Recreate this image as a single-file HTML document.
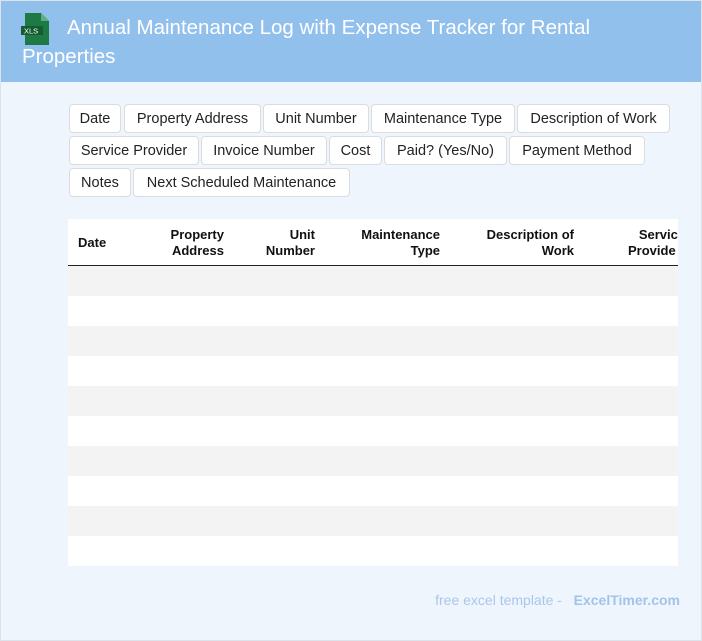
<!DOCTYPE html>
<html><head><style>
*{margin:0;padding:0;box-sizing:border-box}
body{width:702px;height:641px;background:#eef5fd;font-family:"Liberation Sans",sans-serif;position:relative;overflow:hidden}
.frame{position:absolute;left:0;top:0;width:702px;height:641px;border:1px solid #dde3ea;pointer-events:none}
.hdr{position:absolute;left:0;top:0;width:702px;height:82px;background:#92c0ec}
.title{position:absolute;left:22px;top:13px;width:660px;color:#fff;font-size:20.5px;line-height:29px;text-indent:45px}
.tag{position:absolute;height:29px;background:#fff;border:1px solid #dcdcdc;border-radius:4px;font-size:14.5px;line-height:28px;text-align:center;color:#222;white-space:nowrap}
.tbl{position:absolute;left:68px;top:219px;width:610px;height:347px;background:#fff;overflow:hidden}
.th{position:absolute;top:8px;font-size:13px;font-weight:bold;line-height:16px;color:#111;text-align:right;white-space:nowrap}
.line{position:absolute;left:0;top:46px;width:610px;height:1px;background:#222}
.row{position:absolute;left:0;width:610px;height:30px;background:#f3f3f3}
.foot{position:absolute;right:22px;top:592px;font-size:14px;color:#a9c7ea}
</style></head><body>
<div class="hdr"></div>
<svg style="position:absolute;left:21px;top:13px" width="30" height="32" viewBox="0 0 30 32"><path d="M4 0h16l8 8v24H4z" fill="#1e7a45"/><path d="M20 0l8 8h-8z" fill="#5fae7c"/><rect x="0" y="13" width="22" height="9" fill="#155c33"/><text x="3" y="20.5" font-size="7.5" fill="#fff" font-family="Liberation Sans">XLS</text></svg>
<div class="title">Annual Maintenance Log with Expense Tracker for Rental Properties</div>
<div class="tag" style="left:69px;top:104px;width:52px">Date</div>
<div class="tag" style="left:124px;top:104px;width:137px">Property Address</div>
<div class="tag" style="left:263px;top:104px;width:106px">Unit Number</div>
<div class="tag" style="left:371px;top:104px;width:144px">Maintenance Type</div>
<div class="tag" style="left:517px;top:104px;width:153px">Description of Work</div>
<div class="tag" style="left:69px;top:136px;width:130px">Service Provider</div>
<div class="tag" style="left:201px;top:136px;width:126px">Invoice Number</div>
<div class="tag" style="left:329px;top:136px;width:53px">Cost</div>
<div class="tag" style="left:384px;top:136px;width:123px">Paid? (Yes/No)</div>
<div class="tag" style="left:509px;top:136px;width:136px">Payment Method</div>
<div class="tag" style="left:69px;top:168px;width:62px">Notes</div>
<div class="tag" style="left:133px;top:168px;width:217px">Next Scheduled Maintenance</div>
<div class="tbl">
<div class="th" style="left:10px;top:16px;text-align:left">Date</div>
<div class="th" style="right:454px">Property<br>Address</div>
<div class="th" style="right:363px">Unit<br>Number</div>
<div class="th" style="right:238px">Maintenance<br>Type</div>
<div class="th" style="right:104px">Description of<br>Work</div>
<div class="th" style="left:560px;text-align:left">&nbsp;&nbsp;&nbsp;Servic<br>Provide</div>
<div class="line"></div>
<div class="row" style="top:47px"></div>
<div class="row" style="top:107px"></div>
<div class="row" style="top:167px"></div>
<div class="row" style="top:227px"></div>
<div class="row" style="top:287px"></div>
</div>
<div class="foot">free excel template - &nbsp;&nbsp;<b style="color:#a3c3ea">ExcelTimer.com</b></div>
<div class="frame"></div>
</body></html>
